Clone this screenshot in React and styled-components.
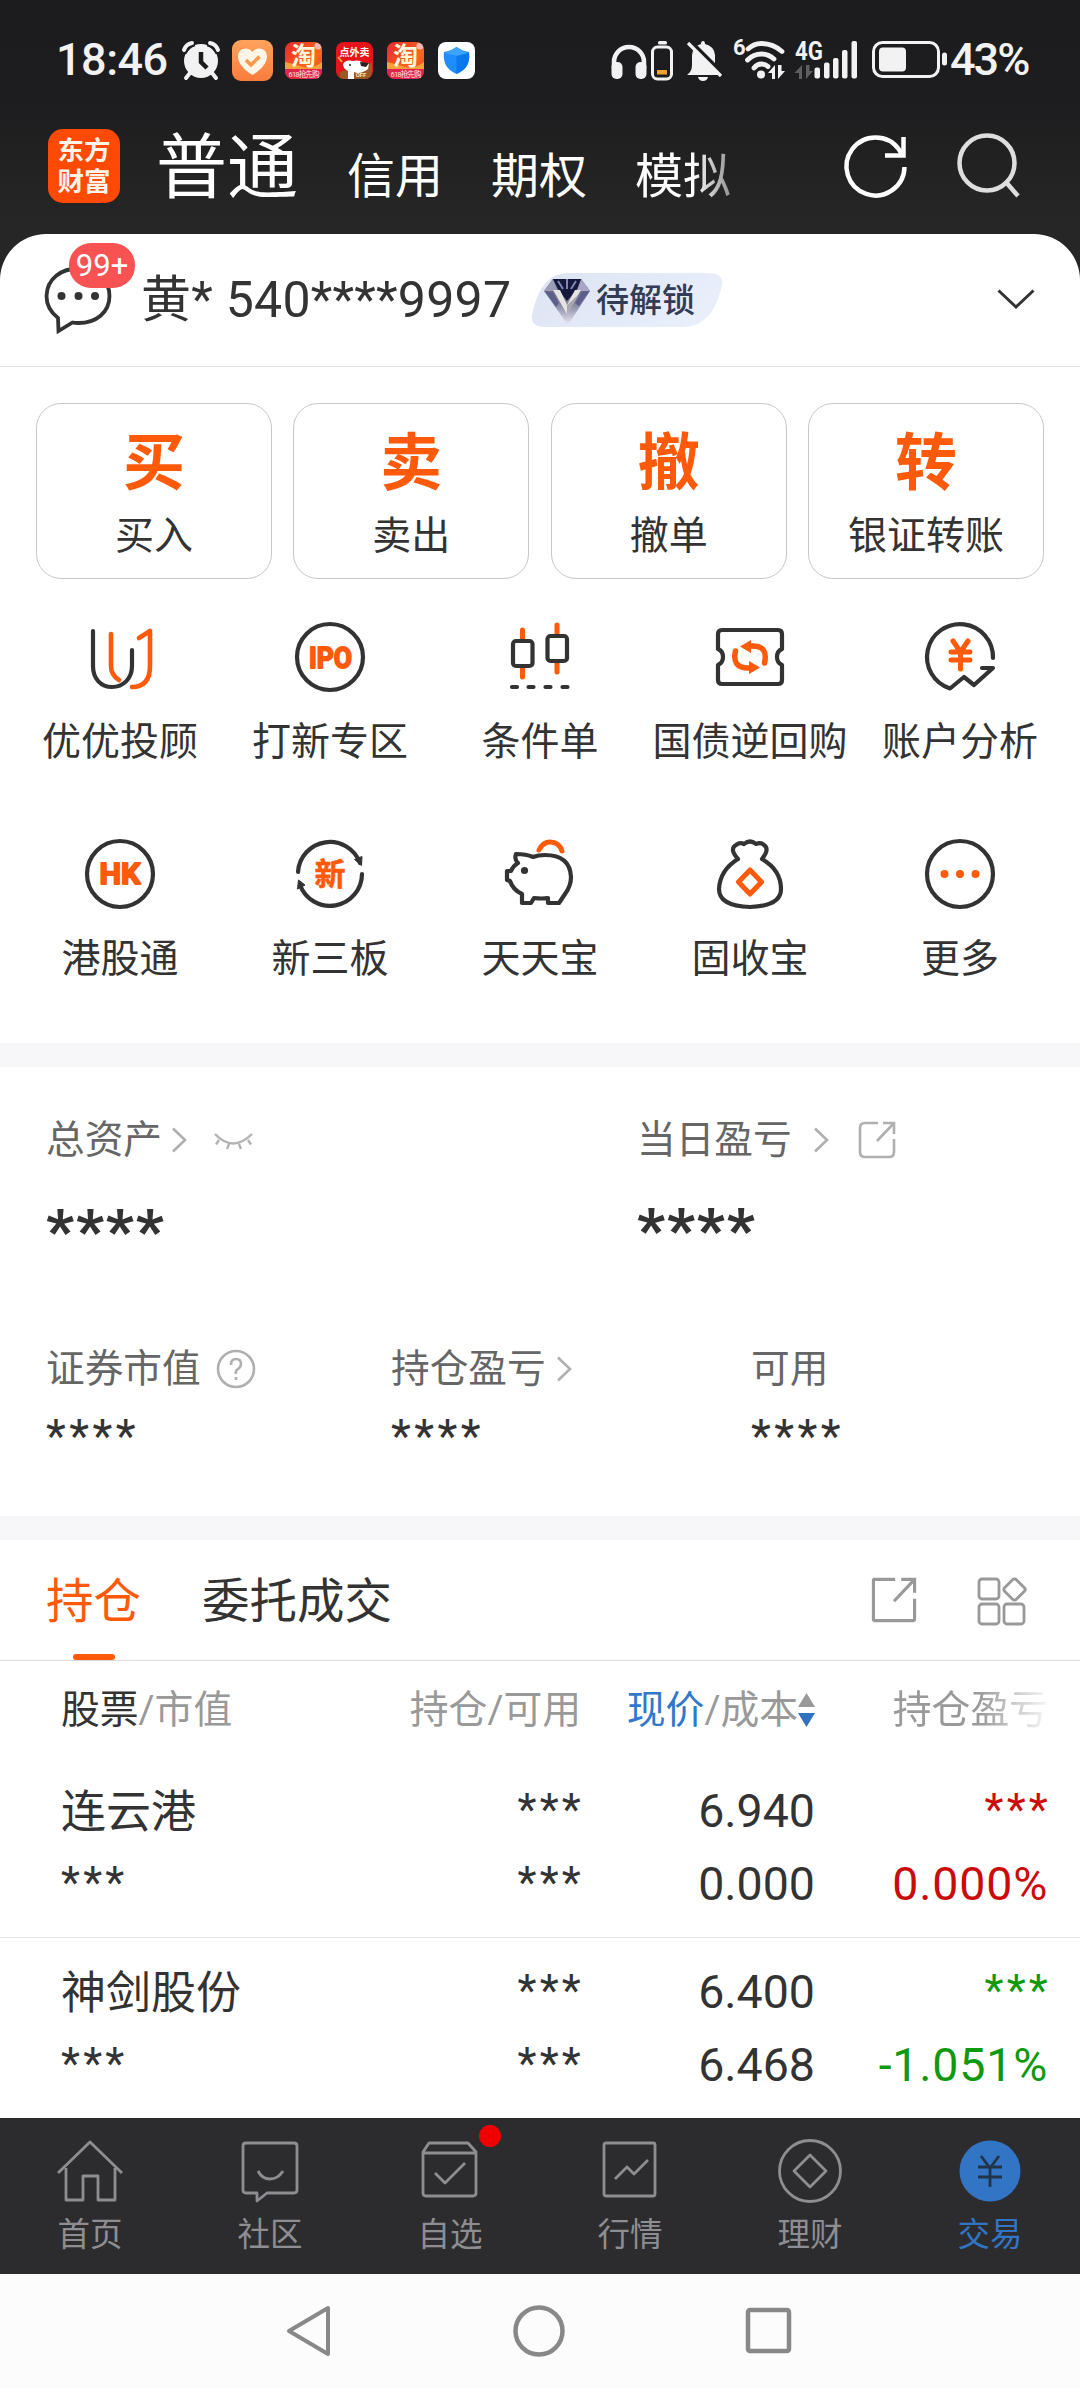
import React from "react";
import styled, { createGlobalStyle, css } from "styled-components";

const ORANGE = "#ff5a0a";
const INK = "#333333";
const MUTED = "#999999";

const GlobalStyle = createGlobalStyle`
  * { box-sizing: border-box; }
  body {
    margin: 0;
    background: #fff;
    color: ${INK};
    font-family: Roboto, "Noto Sans CJK SC", sans-serif;
  }
  svg { display: block; flex: none; overflow: visible; }
`;

const Screen = styled.div`
  width: 1080px;
  height: 2388px;
  display: flex;
  flex-direction: column;
  overflow: hidden;
`;

/* ---------- top area ---------- */
const Top = styled.header`
  height: 366px;
  background: linear-gradient(#1c1c1e 0, #1d1d1f 100px, #262626 220px, #262626 100%);
`;

const StatusBar = styled.div`
  height: 118px;
  padding: 38px 48px 0 56px;
  display: flex;
  justify-content: space-between;
  color: #f2f2f2;
`;

const StatusGroup = styled.div`
  height: 44px;
  display: flex;
  align-items: center;
  gap: ${(p) => p.$gap || 0}px;
`;

const StatusText = styled.span`
  font-size: 45px;
  font-weight: 500;
  line-height: 44px;
  letter-spacing: ${(p) => p.$spacing || 0}px;
  width: ${(p) => p.$width}px;
  white-space: nowrap;
`;

const TitleBar = styled.div`
  height: 116px;
  padding-left: 48px;
  display: flex;
`;

const Logo = styled.div`
  width: 72px;
  height: 74px;
  margin-top: 11px;
  border-radius: 15px;
  background: #ff4a05;
  color: #fff4e8;
  font-size: 26.5px;
  font-weight: 700;
  line-height: 31px;
  text-align: center;
  padding-top: 6px;
`;

const Modes = styled.nav`
  width: 700px;
  margin-left: 37px;
  display: flex;
  color: #fff;
  white-space: nowrap;
`;

const Mode = styled.span`
  font-size: 48px;
  line-height: 60px;
  margin: 29px 48px 0 0;
  ${(p) =>
    p.$active &&
    css`
      font-size: 71px;
      line-height: 80px;
      margin: 10px 49px 0 -1px;
    `}
  ${(p) =>
    p.$faded &&
    css`
      -webkit-mask-image: linear-gradient(90deg, #000 60%, rgba(0, 0, 0, 0.5) 100%);
      mask-image: linear-gradient(90deg, #000 60%, rgba(0, 0, 0, 0.5) 100%);
    `}
`;

const TitleTools = styled.div`
  display: flex;
  gap: 49px;
  margin-left: -12px;
  padding-top: 15px;
`;

const Account = styled.div`
  height: 132px;
  border-radius: 46px 46px 0 0;
  background: #fff;
  display: flex;
  align-items: flex-start;
  padding: 0 45px 0 44px;
`;

const Messages = styled.div`
  position: relative;
  width: 98px;
  padding-top: 32px;
`;

const Unread = styled.span`
  position: absolute;
  left: 25px;
  top: 9px;
  width: 66px;
  height: 45px;
  border-radius: 22px;
  background: #f95252;
  color: #fff;
  font-size: 31px;
  line-height: 45px;
  text-align: center;
`;

const AccountName = styled.span`
  width: 390px;
  font-size: 50px;
  letter-spacing: 0.25px;
  line-height: 60px;
  margin: 36px 0 0 -1px;
  white-space: nowrap;
`;

const Level = styled.div`
  position: relative;
  width: 194px;
  height: 54px;
  margin-top: 39px;
  display: flex;
  align-items: center;
  padding: 2px 0 0 13px;
  gap: 6px;
  color: #323c55;
  font-size: 33px;
  font-weight: 500;
  line-height: 54px;
  white-space: nowrap;
`;

const LevelShape = styled.svg`
  position: absolute;
  left: 0;
  top: 0;
  z-index: -1;
`;

const LevelWrap = styled.div`
  position: relative;
  z-index: 0;
  flex: 1;
`;

const Expand = styled.div`
  padding-top: 55px;
`;

/* ---------- actions ---------- */
const Actions = styled.section`
  height: 213px;
  border-top: 1px solid #e3e3e3;
  padding: 36px 36px 0;
  display: grid;
  grid-template-columns: repeat(4, 236px);
  justify-content: space-between;
`;

const ActionCard = styled.div`
  height: 176px;
  border: 1px solid #c8c8c8;
  border-radius: 25px;
  display: flex;
  flex-direction: column;
  align-items: center;
`;

const ActionGlyph = styled.span`
  color: ${ORANGE};
  font-size: 62px;
  font-weight: 700;
  line-height: 70px;
  margin-top: 25px;
`;

const ActionLabel = styled.span`
  font-size: 39px;
  line-height: 50px;
  margin-top: 12px;
`;

const Shortcuts = styled.section`
  height: 464px;
  padding: 0 15px;
  display: grid;
  grid-template-columns: repeat(5, 210px);
  grid-template-rows: 217px 217px;
`;

const Shortcut = styled.div`
  padding-top: 42px;
  display: flex;
  flex-direction: column;
  align-items: center;
  white-space: nowrap;
`;

const ShortcutLabel = styled.span`
  font-size: 39px;
  line-height: 50px;
  margin-top: 24px;
`;

const Band = styled.div`
  height: 24px;
  background: #f7f7f9;
`;

/* ---------- assets ---------- */
const Assets = styled.section`
  height: 449px;
  padding-left: 46px;
`;

const AssetRow = styled.div`
  display: grid;
  grid-template-columns: ${(p) => p.$columns};
  padding-top: ${(p) => p.$top}px;
`;

const AssetHead = styled.div`
  height: 50px;
  display: flex;
  align-items: center;
  color: #666;
  font-size: 38.7px;
  line-height: 50px;
`;

const Gap = styled.span`
  width: ${(p) => p.$w}px;
`;

const Hidden = styled.div`
  font-size: ${(p) => (p.$large ? 60 : 46)}px;
  font-weight: ${(p) => (p.$large ? 900 : 400)};
  letter-spacing: ${(p) => (p.$large ? 2 : 3.4)}px;
  line-height: 60px;
  margin-top: ${(p) => p.$top}px;
`;

/* ---------- positions ---------- */
const Tabs = styled.div`
  height: 121px;
  border-bottom: 1px solid #dcdcdc;
  padding: 0 53px 0 46px;
  display: flex;
`;

const Tab = styled.div`
  display: flex;
  flex-direction: column;
  align-items: center;
  margin-right: 61px;
  padding-top: 32px;
  font-size: 47.5px;
  line-height: 60px;
  color: ${(p) => (p.$active ? ORANGE : INK)};
  &::after {
    content: "";
    width: 42px;
    height: 6px;
    margin-top: 22px;
    border-radius: 3px;
    background: ${(p) => (p.$active ? ORANGE : "transparent")};
  }
`;

const TabTools = styled.div`
  display: flex;
  gap: 60px;
  margin-left: auto;
  padding-top: 37px;
`;

const columns = css`
  display: grid;
  grid-template-columns: 260px 260px 234px 233px;
  padding: 0 32px 0 61px;
`;

const TableHead = styled.div`
  ${columns}
  height: 96px;
  font-size: 38.8px;
  line-height: 98px;
  color: ${MUTED};
  white-space: nowrap;
`;

const HeadCell = styled.div`
  display: flex;
  align-items: center;
  justify-content: ${(p) => (p.$left ? "flex-start" : "flex-end")};
  b {
    font-weight: 400;
    color: ${(p) => p.$accent || MUTED};
  }
  ${(p) =>
    p.$fade &&
    css`
      -webkit-mask-image: linear-gradient(90deg, #000 70%, rgba(0, 0, 0, 0.08) 100%);
      mask-image: linear-gradient(90deg, #000 70%, rgba(0, 0, 0, 0.08) 100%);
    `}
`;

const Position = styled.div`
  ${columns}
  height: ${(p) => (p.$last ? 180 : 181)}px;
  padding-top: 18px;
  border-bottom: ${(p) => (p.$last ? "0" : "1px solid #e8e8e8")};
  grid-template-rows: 73px 73px;
`;

const Cell = styled.div`
  font-size: ${(p) => (p.$name ? 45 : 46.5)}px;
  line-height: ${(p) => (p.$name ? 75 : 73)}px;
  letter-spacing: ${(p) => p.$spacing || 0}px;
  text-align: ${(p) => (p.$left ? "left" : "right")};
  color: ${(p) => p.$color || INK};
  white-space: nowrap;
`;

const Stars = styled(Cell)`
  font-size: 44px;
  line-height: 71px;
  letter-spacing: 3.2px;
  margin-right: ${(p) => (p.$left ? 0 : -3)}px;
`;

/* ---------- bottom ---------- */
const BottomNav = styled.nav`
  height: 156px;
  background: #2c2c2e;
  display: grid;
  grid-template-columns: repeat(6, 180px);
`;

const NavItem = styled.div`
  position: relative;
  display: flex;
  flex-direction: column;
  align-items: center;
  padding-top: 20px;
  color: ${(p) => (p.$active ? "#3175c4" : "#8e8e92")};
  font-size: 32.5px;
  line-height: 40px;
`;

const NavLabel = styled.span`
  margin-top: 11px;
`;

const Dot = styled.i`
  position: absolute;
  left: 119px;
  top: 7px;
  width: 22px;
  height: 22px;
  border-radius: 50%;
  background: #f00000;
`;

const SystemNav = styled.div`
  height: 114px;
  background: #fcfcfc;
  display: flex;
  align-items: center;
  justify-content: space-between;
  padding: 0 287px 0 284px;
`;

/* ---------- icons ---------- */
const Chevron = () => (
  <svg width="16" height="26" viewBox="0 0 16 26" fill="none" stroke="#b0b0b0" strokeWidth="2.6">
    <path d="M2 1.500 14 13 2 24.500" />
  </svg>
);

const Alarm = () => (
  <svg width="38" height="38" viewBox="0 0 38 38" fill="#f2f2f2">
    <circle cx="19" cy="20" r="17" />
    <g stroke="#f2f2f2" strokeWidth="4" strokeLinecap="round" fill="none">
      <path d="M2 9Q4 3 10 2M36 9Q34 3 28 2M8 32l-4 5M30 32l4 5" />
    </g>
    <path d="M19 11v10l6 6" fill="none" stroke="#1c1c1e" strokeWidth="4.500" />
    <path d="M3.500 13Q7 6 13 4.500M34.500 13Q31 6 25 4.500" fill="none" stroke="#1c1c1e" strokeWidth="1.500" />
  </svg>
);

const HeartSlot = styled.span`
  margin: 0 -2px;
`;

const HeartApp = () => (
  <HeartSlot>
    <svg width="41" height="41" viewBox="0 0 41 41">
      <defs>
        <linearGradient id="heartBg" x1="0" y1="0" x2="0" y2="1">
          <stop offset="0" stopColor="#ffa35c" />
          <stop offset="1" stopColor="#fa7c3d" />
        </linearGradient>
      </defs>
      <rect width="41" height="41" rx="9" fill="url(#heartBg)" />
      <path d="M20.500 35C12 30 6 23 6 16.500 6 8 16 6 20.500 12 25 6 35 8 35 16.500 35 23 29 30 20.500 35Z" fill="#fff5e6" />
      <path d="M14 20l5 5 8.500-8.500" fill="none" stroke="#fa9a4c" strokeWidth="3.600" />
    </svg>
  </HeartSlot>
);

const TaoApp = () => (
  <svg width="37" height="37" viewBox="0 0 37 37">
    <defs>
      <linearGradient id="taoBg" x1="0" y1="0" x2="1" y2="1">
        <stop offset="0" stopColor="#e8262a" />
        <stop offset="0.6" stopColor="#f8681c" />
        <stop offset="1" stopColor="#f0402c" />
      </linearGradient>
      <clipPath id="appClip"><rect width="37" height="37" rx="8" /></clipPath>
    </defs>
    <g clipPath="url(#appClip)">
      <rect width="37" height="37" fill="url(#taoBg)" />
      <path d="M0 20q10 2 18 5t19-5v8H0z" fill="#f9a03a" />
      <path d="M0 27h37v10H0z" fill="#e0244c" />
      <circle cx="33" cy="4" r="3.500" fill="#f7b7b0" />
    </g>
    <text x="18.500" y="23" textAnchor="middle" fontSize="25" fontWeight="700" fill="#fff6dc">淘</text>
    <text x="19" y="35" textAnchor="middle" fontSize="7.500" fontWeight="400" fill="#ffe3e3" textLength="31">618抢先购</text>
  </svg>
);

const DeliveryApp = () => (
  <svg width="37" height="37" viewBox="0 0 37 37">
    <rect width="37" height="37" rx="8" fill="#e5141b" />
    <path d="M4 36v-6l10-3 22-6v8q0 8-8 8H8z" fill="#9b5a24" />
    <path d="M7 22q3-5 10-3 8-2 12 4l4-2-1 6q-8 6-14 3v7h-6v-8q-5-2-5-7z" fill="#fff" />
    <path d="M24 20l9 1-3 4-5-1z" fill="#2c2220" />
    <circle cx="14" cy="23" r="1" fill="#222" />
    <path d="M2 15l4 5" stroke="#f7a13a" strokeWidth="2" />
    <text x="18.500" y="14" textAnchor="middle" fontSize="10" fontWeight="700" fill="#fff">点外卖</text>
    <text x="25" y="35" textAnchor="middle" fontSize="6" fontWeight="700" fill="#ffe7b0">OFF</text>
  </svg>
);

const ShieldApp = () => (
  <svg width="37" height="37" viewBox="0 0 37 37">
    <rect width="37" height="37" rx="8" fill="#fff" />
    <path d="M18.500 5Q24 9 31 10q2 16-12.500 22Q4 26 6 10 13 9 18.500 5Z" fill="#1f8dfb" />
    <path d="M6.500 11 18.500 14 30.500 11Q24 9 18.500 5 13 9 6.500 11Z" fill="#3ba5ff" />
    <path d="M18.500 14v18Q33 26 31 11Z" fill="#0b78ee" />
  </svg>
);

const RightStatus = () => (
  <svg width="338" height="44" viewBox="610 38 338 44" fill="#f2f2f2">
    <path d="M614 68V62a15 15 0 0 1 30 0v6" fill="none" stroke="#f2f2f2" strokeWidth="4.500" />
    <rect x="611.500" y="62" width="11" height="17" rx="5" />
    <rect x="635.500" y="62" width="11" height="17" rx="5" />
    <rect x="652.500" y="47" width="19" height="32" rx="5" fill="none" stroke="#f2f2f2" strokeWidth="3" />
    <rect x="658" y="41" width="9" height="3.500" rx="1.500" />
    <rect x="657" y="70" width="10" height="4.500" fill="#f0a030" />
    <path d="M687 75c4-3 5-6 5-11V55q1-9 9-11 0-3 2-3t2 3q9 2 10 11v9q0 7 4 11z" />
    <path d="M698 77h10q-1 4-5 4t-5-4z" />
    <path d="M690 41l37 37" stroke="#1c1c1e" strokeWidth="4" />
    <path d="M688 43l33 33" stroke="#f2f2f2" strokeWidth="3.200" />
    <text x="733" y="55" fontSize="22" fontWeight="700">6</text>
    <g fill="none" stroke="#f2f2f2" strokeWidth="4.800" strokeLinecap="round">
      <path d="M748 49q6-5.500 13-5.500 12 0 21 8" />
      <path d="M747.500 60q6-6 14-6 7 0 12.500 5" />
      <path d="M754 68q3-4 7.500-4 4 0 6.500 2.500" />
    </g>
    <circle cx="761" cy="74.500" r="4" />
    <path d="M775 65v14h-3v-6h-4zM778 65v14l7-8h-3.500v-6z" />
    <text x="795" y="60" fontSize="25" fontWeight="700" textLength="28" lengthAdjust="spacingAndGlyphs">4G</text>
    <path d="M802 65v14h-3v-6h-4.500zM806 65v14l7-8h-3.500v-6z" fill="#5e5e60" />
    <rect x="814.500" y="67.500" width="5.500" height="11" rx="2" />
    <rect x="824" y="62.500" width="5.500" height="16" rx="2" />
    <rect x="833" y="58" width="5.500" height="20.500" rx="2" />
    <rect x="842" y="50" width="5.500" height="28.500" rx="2" />
    <rect x="851.500" y="41" width="5.500" height="37.500" rx="2" />
    <rect x="873.500" y="42.500" width="65" height="34" rx="9" fill="none" stroke="#f2f2f2" strokeWidth="3" />
    <rect x="879" y="47.500" width="27" height="24" rx="4" />
    <rect x="942" y="52.500" width="5" height="13" rx="2.500" />
  </svg>
);

const Refresh = () => (
  <svg width="62" height="66" viewBox="0 0 62 66" fill="none" stroke="#fff" strokeWidth="4.500">
    <path d="M59.500 34A29 29 0 1 1 54 16.500L58 23" />
    <path d="M58.500 4v18.500H40" />
  </svg>
);

const Search = () => (
  <svg width="66" height="66" viewBox="0 0 66 66" fill="none" stroke="#dedede" strokeWidth="4.500">
    <circle cx="31" cy="30" r="27.500" />
    <path d="M49 48l13 15" />
  </svg>
);

const Bubble = () => (
  <svg width="68" height="68" viewBox="0 0 68 68" fill={INK}>
    <path d="M14 52C5 45 2.500 37 2.500 30 3 12 18 2.500 34.500 2.500s31 11 31 27.500-13.500 27-31 27c-2 0-4 0-6-.500L14.500 65Z" fill="none" stroke={INK} strokeWidth="3.800" />
    <circle cx="17.500" cy="30" r="4" />
    <circle cx="34.500" cy="30" r="4" />
    <circle cx="51" cy="30" r="4" />
  </svg>
);

const Gem = () => (
  <svg width="46" height="48" viewBox="0 0 46 48">
    <defs>
      <linearGradient id="gemTail" x1="0" y1="0" x2="0" y2="1">
        <stop offset="0" stopColor="#4c4a70" />
        <stop offset="0.6" stopColor="#8f90aa" />
        <stop offset="1" stopColor="#ececf4" />
      </linearGradient>
    </defs>
    <path d="M9 2h28l9 12-22 34L0 14Z" fill="url(#gemTail)" />
    <path d="M9 2 14 14 0 14Z" fill="#9a9cb8" />
    <path d="M37 2 33 14 46 14Z" fill="#a9a5c8" />
    <path d="M9 2h28l-4 10-10 12-9-12Z" fill="#15183a" />
    <path d="M14 4l5 8M23 2v10M32 4l-5 8" stroke="#7f86b5" strokeWidth="2" />
    <path d="M1 14l11 16 3-4-6-10zM45 14 35 29l-4-3 7-11z" fill="#5b5f8c" />
    <path d="M9 13h7l7 15 8-15h6L23 37Z" fill="#e6e4e2" />
    <path d="M23 28v9l12-20z" fill="#aaa7b0" />
  </svg>
);

const ShortcutIcon = ({ kind }) => {
  const dark = { stroke: INK, strokeWidth: 4.2, fill: "none", strokeLinecap: "round", strokeLinejoin: "round" };
  const warm = { ...dark, stroke: ORANGE, strokeWidth: 4.6 };
  const label = { textAnchor: "middle", fill: ORANGE, fontWeight: 700, stroke: ORANGE, strokeLinejoin: "round" };
  const art = {
    advisor: (
      <>
        <path d="M9 10v35C9 58 17 66 28 66s20-8 20-21V29" {...dark} />
        <path d="M27 13v32q0 9 8 14" {...warm} />
        <path d="M55 17l11-7v35q0 21-18 21" {...warm} />
      </>
    ),
    ipo: (
      <>
        <circle cx="36" cy="36" r="33" {...dark} />
        <text x="36.500" y="46.500" fontSize="29" textLength="43" lengthAdjust="spacingAndGlyphs" strokeWidth="1.800" {...label}>IPO</text>
      </>
    ),
    candle: (
      <>
        <path d="M18.500 9v10M18.500 47v9M53 4v10M53 42v9" {...warm} strokeWidth="5" />
        <rect x="9" y="20" width="19.500" height="25" rx="3" {...dark} />
        <rect x="43.500" y="15" width="19.500" height="25" rx="3" {...dark} />
        <path d="M8 66h5M24.500 66h5M41.500 66h5M58.500 66h5" {...dark} />
      </>
    ),
    repo: (
      <>
        <path d="M8 9h56q4 0 4 4v15q-5 2-5 8t5 8v15q0 4-4 4H8q-4 0-4-4V44q5-2 5-8t-5-8V13q0-4 4-4Z" {...dark} />
        <path d="M21.500 30q-4 17 13 17h4M50.500 42q4-17-12-17h-5" {...warm} strokeWidth="5.500" />
        <path d="M37 19v13l-11-6.500ZM35 40v13l11-6.500Z" fill={ORANGE} />
      </>
    ),
    analysis: (
      <>
        <path d="M69 37A33 33 0 1 0 26 67.500L40 56l10 8 19-17H58" {...dark} />
        <path d="M29 20l7.500 11 7.500-11M27 31h19M27 39h19M36.500 31v17" {...warm} strokeWidth="5" />
      </>
    ),
    hk: (
      <>
        <circle cx="36" cy="36" r="33" {...dark} />
        <text x="36" y="46" fontSize="29" textLength="41" lengthAdjust="spacingAndGlyphs" strokeWidth="1.800" {...label}>HK</text>
      </>
    ),
    neeq: (
      <>
        <path d="M4 34A32 32 0 0 1 66 25M68 36A32 32 0 0 1 6 47" {...dark} />
        <path d="M60.500 21.500l7.500-3-.500 9zM3.500 51l1-9 6.500 5z" fill={INK} stroke={INK} />
        <text x="36" y="47" fontSize="31" strokeWidth="0.600" {...label}>新</text>
      </>
    ),
    pig: (
      <>
        <path d="M35 12q4-8 11-8 9 0 12 9" {...warm} strokeWidth="5" />
        <path d="M12 16q10 0 17 3 5-2 12-2 25 0 26 22 0 9-6 17l-6 9H44v-5q-6 1-14 0l-3 5H18V56q-9-4-12-13l-3-1V33h4q2-5 7-8-4-4-2-9Z" {...dark} />
        <circle cx="20.500" cy="32.500" r="3.600" fill={INK} />
      </>
    ),
    bag: (
      <>
        <path d="M24 21q-9-10-2-14 4-3 8-1 6-5 12 0 5-2 8 1 6 4-2 14Q67 32 67 51q0 17-31 18Q5 68 5 51 6 32 24 21Z" {...dark} />
        <path d="M36 32 47.500 44 36 56 24.500 44Z" {...warm} strokeWidth="5" />
      </>
    ),
    more: (
      <>
        <circle cx="36" cy="36" r="33" {...dark} />
        <circle cx="20.500" cy="36" r="4" fill={ORANGE} />
        <circle cx="36" cy="36" r="4" fill={ORANGE} />
        <circle cx="51.500" cy="36" r="4" fill={ORANGE} />
      </>
    ),
  };
  return <svg width="72" height="72" viewBox="0 0 72 72">{art[kind]}</svg>;
};

const ClosedEye = () => (
  <svg width="39" height="20" viewBox="0 0 39 20" fill="none" stroke="#b3b3b3" strokeWidth="2.400">
    <path d="M1 4q18 19 37 0M5 10l-3 4.500M15 14l-2 5M25 14l2 5M34 10l3 4.500" />
  </svg>
);

const OpenIcon = ({ size = 38, color = "#b0b0b0", radius = 5 }) => (
  <svg width={size} height={size} viewBox="0 0 38 38" fill="none" stroke={color} strokeWidth="2.600">
    <path d={`M20 2H${2 + radius}Q2 2 2 ${2 + radius}V${36 - radius}Q2 36 ${2 + radius} 36H${36 - radius}Q36 36 36 ${36 - radius}V18`} />
    <path d="M25 2h11v11M36 2 19 20" />
  </svg>
);

const Question = () => (
  <svg width="40" height="40" viewBox="0 0 40 40" fill="none" stroke="#b0b0b0" strokeWidth="2.600">
    <circle cx="20" cy="20" r="18" />
    <path d="M15 16q0-6 5-6t5 5q0 3-3 5t-2 5" />
    <path d="M20 28v3" />
  </svg>
);

const Widgets = () => (
  <svg width="50" height="50" viewBox="0 0 50 50" fill="none" stroke="#999" strokeWidth="2.800">
    <rect x="2" y="2" width="20" height="20" rx="3" />
    <rect x="2" y="27" width="20" height="20" rx="3" />
    <rect x="27" y="27" width="20" height="20" rx="3" />
    <path d="M35.600 2.800q1.900-1.900 3.800 0l8 8q1.700 1.700 0 3.400l-8 8q-1.900 1.900-3.800 0l-8-8q-1.700-1.700 0-3.400z" />
  </svg>
);

const SortArrows = () => (
  <svg width="17" height="36" viewBox="0 0 17 36">
    <path d="M8.500 1 17 15H0z" fill="#999" />
    <path d="M0 21h17L8.500 35z" fill="#2f72c0" />
  </svg>
);

const NavIcon = ({ kind }) => {
  const art = {
    home: <path d="M1 35 33 4l32 31M9 30v32h17V38h15v24h17V30" />,
    chat: (
      <>
        <path d="M9 5h48q3 0 3 3v44q0 3-3 3H30l-10 8v-8H9q-3 0-3-3V8q0-3 3-3Z" />
        <path d="M21 33q4 8 12 8t13-8" />
      </>
    ),
    watch: (
      <>
        <path d="M12 5h39l8 9v41q0 3-3 3H9q-3 0-3-3V14ZM6 15h53" />
        <path d="M18 35l10 10 20-20" />
      </>
    ),
    market: (
      <>
        <rect x="7" y="5" width="51" height="53" rx="2" />
        <path d="M18 41l12-12 7 7 14-14" />
      </>
    ),
    wealth: (
      <>
        <circle cx="33" cy="33" r="30.500" />
        <path d="M33 17l16 16-16 16-16-16Z" />
      </>
    ),
    trade: (
      <>
        <circle cx="33" cy="33" r="30.500" fill="#3175c4" stroke="none" />
        <path d="M24 18l9 12 9-12M21 29h24M21 39h24M33 29v20" stroke="#22344a" />
      </>
    ),
  };
  return (
    <svg width="66" height="66" viewBox="0 0 66 66" fill="none" stroke="#8e8e92" strokeWidth="2.800" strokeLinejoin="round">
      {art[kind]}
    </svg>
  );
};

/* ---------- data ---------- */
const actions = [["买", "买入"], ["卖", "卖出"], ["撤", "撤单"], ["转", "银证转账"]];
const shortcuts = [
  ["advisor", "优优投顾"], ["ipo", "打新专区"], ["candle", "条件单"], ["repo", "国债逆回购"], ["analysis", "账户分析"],
  ["hk", "港股通"], ["neeq", "新三板"], ["pig", "天天宝"], ["bag", "固收宝"], ["more", "更多"],
];
const positions = [
  { name: "连云港", price: "6.940", cost: "0.000", rate: "0.000%", color: "#cc0a0a" },
  { name: "神剑股份", price: "6.400", cost: "6.468", rate: "-1.051%", color: "#0f990f" },
];
const nav = [["home", "首页"], ["chat", "社区"], ["watch", "自选"], ["market", "行情"], ["wealth", "理财"], ["trade", "交易"]];

export default function App() {
  return (
    <Screen>
      <GlobalStyle />
      <Top>
        <StatusBar>
          <StatusGroup $gap={14}>
            <StatusText $width={112} $spacing={-0.5}>18:46</StatusText>
            <Alarm />
            <HeartApp />
            <TaoApp />
            <DeliveryApp />
            <TaoApp />
            <ShieldApp />
          </StatusGroup>
          <StatusGroup $gap={2}>
            <RightStatus />
            <StatusText $width={82} $spacing={-2}>43%</StatusText>
          </StatusGroup>
        </StatusBar>
        <TitleBar>
          <Logo>东方<br />财富</Logo>
          <Modes>
            <Mode $active>普通</Mode>
            <Mode>信用</Mode>
            <Mode>期权</Mode>
            <Mode $faded>模拟</Mode>
          </Modes>
          <TitleTools>
            <Refresh />
            <Search />
          </TitleTools>
        </TitleBar>
        <Account>
          <Messages>
            <Bubble />
            <Unread>99+</Unread>
          </Messages>
          <AccountName>黄* 540****9997</AccountName>
          <LevelWrap>
            <Level>
              <LevelShape width="194" height="54" viewBox="0 0 194 54">
                <defs>
                  <linearGradient id="levelBg" x1="0" y1="0" x2="1" y2="0.400">
                    <stop offset="0" stopColor="#dce3f2" />
                    <stop offset="1" stopColor="#e9eefb" />
                  </linearGradient>
                </defs>
                <path d="M38 0H176Q196 0 190 16C184 40 172 54 152 54H14Q-3 54 2 38C8 14 18 0 38 0Z" fill="url(#levelBg)" />
              </LevelShape>
              <Gem />
              待解锁
            </Level>
          </LevelWrap>
          <Expand>
            <svg width="38" height="20" viewBox="0 0 38 20" fill="none" stroke={INK} strokeWidth="3">
              <path d="M1.500 1.500 19 18 36.500 1.500" />
            </svg>
          </Expand>
        </Account>
      </Top>

      <Actions>
        {actions.map(([glyph, label]) => (
          <ActionCard key={label}>
            <ActionGlyph>{glyph}</ActionGlyph>
            <ActionLabel>{label}</ActionLabel>
          </ActionCard>
        ))}
      </Actions>

      <Shortcuts>
        {shortcuts.map(([kind, label]) => (
          <Shortcut key={kind}>
            <ShortcutIcon kind={kind} />
            <ShortcutLabel>{label}</ShortcutLabel>
          </Shortcut>
        ))}
      </Shortcuts>

      <Band />
      <Assets>
        <AssetRow $columns="591px 1fr" $top={48}>
          <div>
            <AssetHead>总资产<Gap $w={9} /><Chevron /><Gap $w={27} /><ClosedEye /></AssetHead>
            <Hidden $large $top={36}>****</Hidden>
          </div>
          <div>
            <AssetHead>当日盈亏<Gap $w={21} /><Chevron /><Gap $w={29} /><OpenIcon /></AssetHead>
            <Hidden $large $top={35}>****</Hidden>
          </div>
        </AssetRow>
        <AssetRow $columns="345px 360px 1fr" $top={83}>
          <div>
            <AssetHead>证券市值<Gap $w={15} /><Question /></AssetHead>
            <Hidden $top={12}>****</Hidden>
          </div>
          <div>
            <AssetHead>持仓盈亏<Gap $w={10} /><Chevron /></AssetHead>
            <Hidden $top={12}>****</Hidden>
          </div>
          <div>
            <AssetHead>可用</AssetHead>
            <Hidden $top={12}>****</Hidden>
          </div>
        </AssetRow>
      </Assets>

      <Band />
      <Tabs>
        <Tab $active>持仓</Tab>
        <Tab>委托成交</Tab>
        <TabTools>
          <OpenIcon size={46} color="#999" radius={1} />
          <Widgets />
        </TabTools>
      </Tabs>
      <TableHead>
        <HeadCell $left $accent={INK}><b>股票</b>/市值</HeadCell>
        <HeadCell>持仓/可用</HeadCell>
        <HeadCell $accent="#2f78cc"><b>现价</b>/成本<SortArrows /></HeadCell>
        <HeadCell $fade>持仓盈亏</HeadCell>
      </TableHead>
      {positions.map((p, i) => (
        <Position key={p.name} $last={i === 1}>
          <Cell $left $name>{p.name}</Cell>
          <Stars>***</Stars>
          <Cell>{p.price}</Cell>
          <Stars $color={p.color}>***</Stars>
          <Stars $left>***</Stars>
          <Stars>***</Stars>
          <Cell>{p.cost}</Cell>
          <Cell $color={p.color} $spacing={0.8}>{p.rate}</Cell>
        </Position>
      ))}

      <BottomNav>
        {nav.map(([kind, label]) => (
          <NavItem key={kind} $active={kind === "trade"}>
            <NavIcon kind={kind} />
            {kind === "watch" && <Dot />}
            <NavLabel>{label}</NavLabel>
          </NavItem>
        ))}
      </BottomNav>
      <SystemNav>
        <svg width="48" height="52" viewBox="0 0 48 52" fill="none" stroke="#888" strokeWidth="4" strokeLinejoin="round">
          <path d="M44 3v46L5 26Z" />
        </svg>
        <svg width="52" height="52" viewBox="0 0 52 52" fill="none" stroke="#888" strokeWidth="4.500">
          <circle cx="26" cy="26" r="23.500" />
        </svg>
        <svg width="48" height="48" viewBox="0 0 48 48" fill="none" stroke="#888" strokeWidth="4.500">
          <rect x="3" y="3" width="41" height="41" rx="2" />
        </svg>
      </SystemNav>
    </Screen>
  );
}
